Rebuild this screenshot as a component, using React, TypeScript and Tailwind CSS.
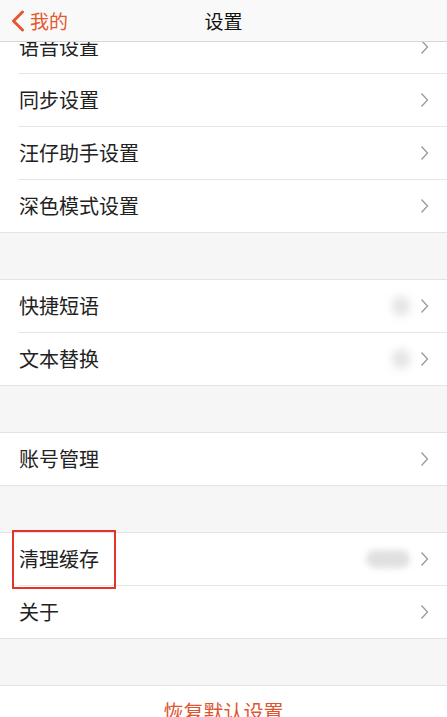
import React from 'react';

const font = { fontFamily: '"Noto Sans CJK SC", "Noto Sans", sans-serif' };

const Chevron = () => (
  <svg width="9" height="16" viewBox="0 0 9 16" className="shrink-0">
    <path d="M1.5 1.5 L7.5 8 L1.5 14.5" fill="none" stroke="#9a9a9a" strokeWidth="1.3" />
  </svg>
);

type Row = { label: string; blob?: 'sm' | 'lg'; boxed?: boolean };

const groups: Row[][] = [
  [{ label: '语音设置' }, { label: '同步设置' }, { label: '汪仔助手设置' }, { label: '深色模式设置' }],
  [{ label: '快捷短语', blob: 'sm' }, { label: '文本替换', blob: 'sm' }],
  [{ label: '账号管理' }],
  [{ label: '清理缓存', blob: 'lg', boxed: true }, { label: '关于' }],
];

const SettingRow = ({ row, last }: { row: Row; last: boolean }) => (
  <div className="relative">
    <div className="flex h-[52px] items-center pl-[19px] pr-[18px]">
      <span className="flex-1 text-[20px] leading-none text-[#222]">{row.label}</span>
      {row.blob === 'sm' && <div className="mr-[10px] h-[20px] w-[18px] rounded-full bg-[#e4e4e4] blur-[4px]" />}
      {row.blob === 'lg' && <div className="mr-[10px] h-[18px] w-[44px] rounded-full bg-[#e0e0e0] blur-[3px]" />}
      <Chevron />
    </div>
    {!last && <div className="ml-[18px] h-px bg-[#e6e6e6]" />}
    {row.boxed && (
      <div className="absolute left-[12px] top-[-3px] h-[59px] w-[104px] border-2 border-[#e3342c]" />
    )}
  </div>
);

export default function App() {
  return (
    <div className="relative h-[717px] w-[447px] overflow-hidden bg-[#f6f6f6]" style={font}>
      {/* nav bar */}
      <div className="absolute left-0 right-0 top-0 z-10 flex h-[42px] items-center border-b border-[#d6d6d6] bg-[#f9f9f9]">
        <div className="flex items-center pl-[10px]">
          <svg width="16" height="22" viewBox="0 0 16 22">
            <path d="M12.5 2 L3.5 11 L12.5 20" fill="none" stroke="#e5582f" strokeWidth="3" strokeLinecap="round" strokeLinejoin="round" />
          </svg>
          <span className="ml-[4px] text-[19px] leading-none text-[#e5582f]">我的</span>
        </div>
        <div className="absolute left-0 right-0 text-center text-[19px] leading-none text-[#111]">设置</div>
      </div>

      <div className="flex flex-col gap-[46px] pt-[20px]">
        {groups.map((g, gi) => (
          <div key={gi} className="border-y border-[#e3e3e3] bg-white">
            {g.map((row, ri) => (
              <SettingRow key={row.label} row={row} last={ri === g.length - 1} />
            ))}
          </div>
        ))}
        <div className="border-t border-[#e3e3e3] bg-white">
          <div className="flex h-[52px] items-center justify-center text-[20px] leading-none text-[#e0552f]">
            恢复默认设置
          </div>
        </div>
      </div>
    </div>
  );
}
